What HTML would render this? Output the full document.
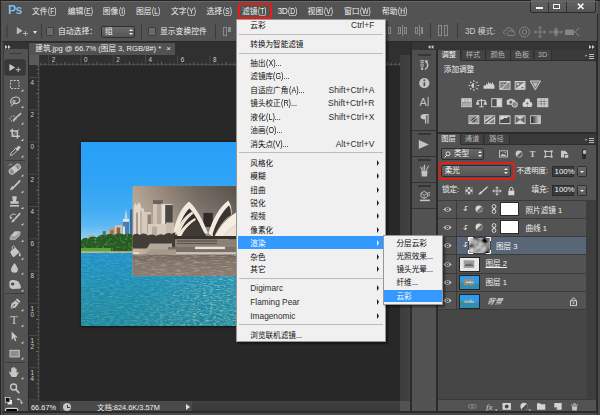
<!DOCTYPE html>
<html lang="zh-CN">
<head>
<meta charset="utf-8">
<title>Photoshop</title>
<style>
*{box-sizing:border-box;margin:0;padding:0}
html,body{width:600px;height:415px;overflow:hidden;background:#4a4a4a}
body{position:relative;font-family:"Liberation Sans","Noto Sans CJK SC",sans-serif;font-size:8.5px;color:#e6e6e6;line-height:1}
.a{position:absolute}
.t{position:absolute;white-space:nowrap;line-height:10px;height:10px}
/* frame */
#frame{left:0;top:0;width:600px;height:415px;background:#4a4a4a;border:1px solid #232323;border-left:1.5px solid #262626;border-bottom:none}
/* menubar */
#menubar{left:2px;top:1px;width:597px;height:19.5px;background:#535353;border-bottom:1px solid #363636}
#menubar .t{top:5px;font-size:7.8px;color:#f0f0f0;font-weight:400}
.l{display:inline-block;font-size:8.3px;transform:scaleX(.8);transform-origin:0 50%;margin-left:0.6px}
.l u{text-decoration-thickness:0.6px;text-underline-offset:0.6px;text-decoration-color:rgba(240,240,240,.55)}
#menubar #ps{left:5.5px;top:0.4px;font-size:13.6px;transform:scaleX(.9);transform-origin:0 50%;font-weight:bold;color:#7cbef0;line-height:17px;height:17px;letter-spacing:-0.6px}
/* options bar */
#optbar{left:2px;top:20px;width:597px;height:22px;background:#535353;border-top:1px solid #565656;border-bottom:1px solid #2a2a2a}
#optbar .t{top:5px;font-size:7.8px;color:#f0f0f0;font-weight:400}
/* tools */
#tools{left:3px;top:42px;width:25px;height:372px;background:#535353}
#toolshead{left:3px;top:42px;width:25px;height:7px;background:#333}
/* doc */
#tabbar{left:28px;top:42px;width:384px;height:13px;background:#303030}
#tab{left:29px;top:42.7px;width:145.7px;height:12.3px;background:#525252}
#tab .t{left:6.3px;top:1.8px;font-size:7.6px;color:#f0f0f0;font-weight:400}
#rcorner{left:29px;top:55px;width:10px;height:10px;background:#5a5a5a}
#vscroll{left:399.5px;top:55px;width:10.5px;height:358px;background:linear-gradient(90deg,#3c3c3c,#424242)}
#canvas{left:28px;top:55px;width:384px;height:358px;background:#282828}
#status{left:29px;top:401px;width:371px;height:12px;background:#4a4a4a}
#status .t{top:2px;font-size:7.4px;color:#f0f0f0}
/* dropdown */
#menu{left:236.3px;top:18.8px;width:149.8px;height:323.7px;background:#f0f0f0;box-shadow:inset 0 0 0 1px #979797,1.5px 1.5px 2px rgba(0,0,0,.45)}
#menu .t{font-size:7.6px;color:#0c0c0c;font-weight:400;line-height:11px;height:11px}
#menu .sc{font-size:8.5px;font-weight:400;color:#2e2e2e}
#menu .sep{position:absolute;left:2.5px;width:144px;height:1px;background:#bdbdbd}
#menu .arr{position:absolute;left:140.5px;width:0;height:0;border-left:2.5px solid #1a1a1a;border-top:3px solid transparent;border-bottom:3px solid transparent}
#sub{left:383.3px;top:234.6px;width:60px;height:70px;background:#f0f0f0;box-shadow:inset 0 0 0 1px #979797,1.5px 1.5px 2px rgba(0,0,0,.45)}
#sub .t{font-size:7.6px;color:#0c0c0c;font-weight:400;line-height:11px;height:11px}
/* right */
#rightbg{left:410px;top:42px;width:190px;height:372px;background:#2b2b2b}
#dockhead{left:412px;top:42px;width:184px;height:8px;background:#353535}
#dock{left:412px;top:50px;width:24px;height:363px;background:#525252}
#dock .dg{left:0;width:24px;background:#4f4f4f;box-shadow:0 1px 0 #333}
#dock .gr{left:5.5px;width:13px;height:2px;background:#363636}
.pn{background:#535353}
.tb{background:#3a3a3a;border-bottom:1px solid #2e2e2e}
.tab{top:0;height:10.5px;background:#424242;border-right:1px solid #2e2e2e;border-bottom:1px solid #2e2e2e;font-size:7.3px;line-height:10.5px;text-align:center;color:#b4b4b4;font-weight:400;white-space:nowrap}
.tab.on{background:#535353;color:#f4f4f4;border-bottom-color:#535353}
.pm{width:8px;height:5px;background:linear-gradient(#bbb 0 1px,transparent 1px 2px,#bbb 2px 3px,transparent 3px 4px,#bbb 4px 5px) 3px 0/5px 5px no-repeat}
.pm:before{content:"";position:absolute;left:-1px;top:1.5px;border-top:2px solid #bbb;border-left:1.5px solid transparent;border-right:1.5px solid transparent}
.ud{width:4px;height:7px}
.ud:before{content:"";position:absolute;left:0;top:0;border-bottom:2.5px solid #f0f0f0;border-left:2px solid transparent;border-right:2px solid transparent}
.ud:after{content:"";position:absolute;left:0;top:4.3px;border-top:2.5px solid #f0f0f0;border-left:2px solid transparent;border-right:2px solid transparent}
.fld{width:22px;height:11.4px;background:#3a3a3a;border:1px solid #2c2c2c}
.btn{width:10.2px;height:11.4px;background:linear-gradient(#6a6a6a,#585858);border:1px solid #2e2e2e;border-radius:1.5px}
.btn:after{content:"";position:absolute;left:2.3px;top:4px;border-top:2.6px solid #f0f0f0;border-left:2.3px solid transparent;border-right:2.3px solid transparent}
.m{display:inline-block;font-size:8.2px;transform:scaleX(.88);transform-origin:0 50%;margin-left:0.4px}
</style>
</head>
<body>
<div class="a" id="frame"></div>

<!-- MENUBAR -->
<div class="a" id="menubar">
  <div class="t" id="ps">Ps</div>
  <div class="t" style="left:30px">文件<span class="l">(<u>F</u>)</span></div>
  <div class="t" style="left:65.8px">编辑<span class="l">(<u>E</u>)</span></div>
  <div class="t" style="left:100.8px">图像<span class="l">(<u>I</u>)</span></div>
  <div class="t" style="left:134px">图层<span class="l">(<u>L</u>)</span></div>
  <div class="t" style="left:169px">文字<span class="l">(<u>Y</u>)</span></div>
  <div class="t" style="left:204.5px">选择<span class="l">(<u>S</u>)</span></div>
  <div class="t" style="left:240px">滤镜<span class="l">(<u>T</u>)</span></div>
  <div class="t" style="left:275.5px"><span style="font-size:8.3px;letter-spacing:-0.4px">3D</span><span class="l">(<u>D</u>)</span></div>
  <div class="t" style="left:305.6px">视图<span class="l">(<u>V</u>)</span></div>
  <div class="t" style="left:342px">窗口<span class="l">(<u>W</u>)</span></div>
  <div class="t" style="left:380px">帮助<span class="l">(<u>H</u>)</span></div>
</div>
<div class="a" style="left:238px;top:3px;width:34px;height:16px;border:2.2px solid #ea1a14;border-radius:2.5px"></div>
<!-- window controls -->
<div class="a" id="wc" style="left:530px;top:0;width:66px;height:12.8px;background:linear-gradient(#626262,#565656);border:1px solid #2c2c2c;border-top:none;border-radius:0 0 3px 3px"></div>
<div class="a" style="left:548px;top:1px;width:1px;height:11px;background:#333"></div>
<div class="a" style="left:565.5px;top:1px;width:1px;height:11px;background:#333"></div>
<div class="a" style="left:536.3px;top:7px;width:6.7px;height:2.2px;background:#f4f4f4"></div>
<div class="a" style="left:553px;top:3.8px;width:7.2px;height:5.6px;border:1.6px solid #f4f4f4"></div>
<svg class="a" style="left:576.5px;top:3.3px" width="7.4" height="6.6" viewBox="0 0 7.4 6.6"><path d="M0.9 0.6L6.5 6M6.5 0.6L0.9 6" stroke="#f4f4f4" stroke-width="1.6" fill="none"/></svg>

<!-- OPTIONS BAR -->
<div class="a" id="optbar"><div class="a" style="left:0;top:1px;width:597px;height:20px">
  <div class="a" style="left:4px;top:3px;width:1.5px;height:13px;background:#464646"></div>
  <svg class="a" style="left:14px;top:4px" width="14" height="11" viewBox="0 0 14 11"><path d="M0.8 1L0.8 8.4L6.6 4.7Z" fill="#bcbcbc"/><path d="M9.4 5V10M6.9 7.5H11.9" stroke="#bcbcbc" stroke-width="0.9" fill="none"/></svg>
  <div class="a" style="left:31px;top:9px;width:0;height:0;border-top:3px solid #e0e0e0;border-left:2.5px solid transparent;border-right:2.5px solid transparent"></div>
  <div class="a" style="left:39px;top:2px;width:1px;height:15px;background:#3a3a3a"></div>
  <div class="a" style="left:44px;top:5px;width:8px;height:9px;background:#6a6a6a;border:1px solid #3c3c3c;border-radius:1.5px"></div>
  <div class="t" style="left:56px">自动选择：</div>
  <div class="a" style="left:98.5px;top:3.5px;width:34.5px;height:12.7px;background:linear-gradient(#6b6b6b,#565656);border:1px solid #2f2f2f;border-radius:2px"></div>
  <div class="t" style="left:103px">组</div>
  <div class="a" style="left:127px;top:6.5px;width:0;height:0;border-bottom:2.5px solid #eee;border-left:2px solid transparent;border-right:2px solid transparent"></div>
  <div class="a" style="left:127px;top:10.5px;width:0;height:0;border-top:2.5px solid #eee;border-left:2px solid transparent;border-right:2px solid transparent"></div>
  <div class="a" style="left:139px;top:2px;width:1px;height:15px;background:#3a3a3a"></div>
  <div class="a" style="left:146px;top:5px;width:8px;height:9px;background:#6a6a6a;border:1px solid #3c3c3c;border-radius:1.5px"></div>
  <div class="t" style="left:158px">显示变换控件</div>
  <div class="a" style="left:213px;top:2px;width:1px;height:15px;background:#3a3a3a"></div>
  <div class="a" style="left:221px;top:5px;width:4px;height:9px;border:1px solid #8a8a8a"></div>
  <div class="a" style="left:226px;top:5px;width:3px;height:5px;background:#8a8a8a"></div>
  <!-- right side icons -->
  <div class="a" style="left:386px;top:5px;width:3px;height:7px;border:1px solid #8a8a8a"></div>
  <div class="a" style="left:396px;top:5px;width:3px;height:7px;border:1px solid #8a8a8a"></div><div class="a" style="left:400px;top:3px;width:1px;height:11px;background:#8a8a8a"></div><div class="a" style="left:402px;top:5px;width:3px;height:7px;border:1px solid #8a8a8a"></div>
  <div class="a" style="left:413px;top:5px;width:3px;height:7px;border:1px solid #8a8a8a"></div><div class="a" style="left:417px;top:3px;width:1px;height:11px;background:#8a8a8a"></div><div class="a" style="left:419px;top:5px;width:2px;height:7px;background:#8a8a8a"></div>
  <div class="a" style="left:428px;top:1px;width:1px;height:15px;background:#3a3a3a"></div>
  <div class="a" style="left:436px;top:3px;width:4px;height:11px;border:1px solid #8a8a8a"></div><div class="a" style="left:442px;top:3px;width:4px;height:11px;border:1px solid #8a8a8a"></div>
  <div class="a" style="left:455px;top:1px;width:1px;height:15px;background:#3a3a3a"></div>
  <div class="t" style="left:463px;color:#d0d0d0"><span style="font-size:8.2px">3D</span> 模式:</div>
  <svg class="a" style="left:500px;top:2.5px" width="80" height="14" viewBox="0 0 80 14" fill="none" stroke="#858585" stroke-width="1">
    <path d="M3 9.5a2.3 2.3 0 0 1 .8-4.4a3.2 3.2 0 0 1 6-.6a2.3 2.3 0 0 1 2 2.6M6 10.5a2 2 0 0 1 .5-3.5a2.6 2.6 0 0 1 4.8 0a2 2 0 0 1 .6 3.6Z"/>
    <circle cx="22.5" cy="7" r="5"/><circle cx="22.5" cy="7" r="2.2"/>
    <path d="M38 1.5V12.5M32.5 7H43.5M36.3 3.2L38 1.5L39.7 3.2M36.3 10.8L38 12.5L39.7 10.8M34.2 5.3L32.5 7L34.2 8.7M41.8 5.3L43.5 7L41.8 8.7"/>
    <path d="M47.5 7H60.5M54 3V11M52.3 4.5L54 3L55.7 4.5M52.3 9.5L54 11L55.7 9.5M49 5.5L47.5 7L49 8.5M59 5.5L60.5 7L59 8.5"/><circle cx="54" cy="7" r="1.8" fill="#858585"/>
    <rect x="63.5" y="5" width="8" height="4.5" fill="#858585"/><path d="M77 3L73 7L77 11"/>
  </svg>
</div></div>

<!-- TOOLS -->
<div class="a" id="tools"></div>
<div class="a" id="toolshead"></div>
<svg class="a" style="left:5px;top:45px" width="6" height="4" viewBox="0 0 6 4"><path d="M0 0L2.5 2L0 4ZM3 0L5.5 2L3 4Z" fill="#d0d0d0"/></svg>
<div class="a" style="left:9px;top:53px;width:13px;height:1px;background:#3a3a3a"></div>
<div class="a" style="left:5px;top:60px;width:20px;height:15px;background:#383838;border-radius:2px;box-shadow:0 0 0 0.5px #2c2c2c"></div>
<div class="a" style="left:5px;top:160px;width:20px;height:1px;background:#3c3c3c"></div>
<div class="a" style="left:5px;top:293px;width:20px;height:1px;background:#3c3c3c"></div>
<div class="a" style="left:5px;top:362px;width:20px;height:1px;background:#3c3c3c"></div>
<svg class="a" style="left:0;top:42px" width="29" height="373" viewBox="0 42 29 373"><path d="M9.4 64V71L15.2 67.5Z" fill="#c8c8c8"/><path d="M18.2 67.2V72.2M15.7 69.7H20.7" stroke="#c8c8c8" stroke-width="0.9"/><rect x="10.5" y="80.5" width="8.5" height="8" fill="none" stroke="#c6c6c6" stroke-width="1" stroke-dasharray="2 1.2"/><path d="M23.3 89.3V91.5H21.1Z" fill="#e0e0e0"/><path d="M11.5 103.8C9.5 101.5 11 97.5 15.5 97C19.5 96.8 20.8 100 19 102.2C17.5 104 14.5 104 13.2 102.6C12.2 101.4 13.2 100.2 14.5 100.6C15.6 101 15 102.6 13.5 103.6C12.5 104.5 11.5 105.6 11 106.2" fill="none" stroke="#c6c6c6" stroke-width="1.1"/><path d="M23.3 105.8V108H21.1Z" fill="#e0e0e0"/><ellipse cx="13" cy="118.6" rx="3" ry="2.6" fill="none" stroke="#c6c6c6" stroke-width="0.9" stroke-dasharray="1.6 1"/><path d="M14 119.5L20.6 113.6" stroke="#c6c6c6" stroke-width="1.6" stroke-linecap="round"/><path d="M12.6 121.3C13.4 121 14.8 120.6 15.2 119.4L14.2 118.6C13 118.9 13.2 120.4 12.6 121.3Z" fill="#c6c6c6"/><path d="M23.3 122.3V124.5H21.1Z" fill="#e0e0e0"/><path d="M12.3 128.7V136.2H19.8M10 131H17.4V138.4" fill="none" stroke="#c6c6c6" stroke-width="1.5"/><path d="M12.8 135.6L19.2 129.3" stroke="#c6c6c6" stroke-width="0.7"/><path d="M23.3 138.8V141H21.1Z" fill="#e0e0e0"/><path d="M10.3 155.4L11 153L15.6 148.4L17.4 150.2L12.8 154.8Z" fill="none" stroke="#c6c6c6" stroke-width="0.9"/><path d="M15 147.6L18.2 150.8M16 149L18 146.6Q19.4 145.6 20 147Q20.3 148 19.4 148.8L17.4 150.6Z" fill="#c6c6c6" stroke="#c6c6c6" stroke-width="1"/><path d="M23.3 155.3V157.5H21.1Z" fill="#e0e0e0"/><g transform="rotate(-38 14.8 169.2)"><rect x="8.6" y="166.4" width="12.4" height="5.6" rx="2.6" fill="#8c8c8c" stroke="#c6c6c6" stroke-width="1"/><rect x="12.6" y="166.4" width="4.4" height="5.6" fill="#c6c6c6"/></g><path d="M9 165.5Q9.5 163.6 12 164.6" fill="none" stroke="#c6c6c6" stroke-width="0.9" stroke-dasharray="1.3 0.9"/><path d="M23.3 174.3V176.5H21.1Z" fill="#e0e0e0"/><path d="M19.8 180.9L14.4 186.6" stroke="#c6c6c6" stroke-width="1.7" stroke-linecap="round"/><path d="M9.6 190.2C11.4 189.9 13.8 189.3 14.4 187.4L12.8 186C10.9 186.4 11 188.8 9.6 190.2Z" fill="#c6c6c6"/><path d="M23.3 190.60000000000002V192.8H21.1Z" fill="#e0e0e0"/><path d="M13 196.3H16Q17 196.3 16.8 197.4L16 201.2H18.6V203.8H10.4V201.2H13L12.2 197.4Q12 196.3 13 196.3Z" fill="#c6c6c6"/><rect x="10" y="205" width="9" height="1.6" fill="#c6c6c6"/><path d="M23.3 206.8V209H21.1Z" fill="#e0e0e0"/><path d="M19.8 213.6L15.2 218.6" stroke="#c6c6c6" stroke-width="1.6" stroke-linecap="round"/><path d="M11 222.6C12.6 222.3 14.8 221.8 15.3 220L13.8 218.8C12.2 219.2 12.3 221.4 11 222.6Z" fill="#c6c6c6"/><path d="M10.4 218.4A3.4 3.4 0 0 1 15.6 214.6" fill="none" stroke="#c6c6c6" stroke-width="1"/><path d="M9.6 216.6L10.4 219.3L12.6 217.8Z" fill="#c6c6c6"/><path d="M23.3 223.10000000000002V225.3H21.1Z" fill="#e0e0e0"/><path d="M10.2 236.2L14.8 231.2H20L15.4 236.2Z" fill="#c6c6c6"/><path d="M10.2 236.8H15.4L20 231.8V235L15.4 239.6H10.2Z" fill="#9c9c9c" stroke="#c6c6c6" stroke-width="0.7"/><path d="M23.3 239.8V242H21.1Z" fill="#e0e0e0"/><path d="M11 250.8L15.2 247.4L19.6 252L14.6 256.6Q13.6 257.4 12.6 256.4L10.6 253.2Q10 251.6 11 250.8Z" fill="#c6c6c6"/><path d="M12.2 249.4Q11.6 246.2 13.4 246Q15 246 15.4 249" fill="none" stroke="#c6c6c6" stroke-width="0.9"/><path d="M19.8 252.4Q21.2 254.6 20.4 256.2Q19.4 256.8 18.8 255.6Q18.6 254 19.8 252.4Z" fill="#c6c6c6"/><path d="M23.3 257.5V259.7H21.1Z" fill="#e0e0e0"/><path d="M14.5 263Q18.2 268 17.9 269.6A3.4 3.2 0 0 1 11.1 269.6Q10.8 268 14.5 263Z" fill="#c6c6c6"/><path d="M23.3 272.40000000000003V274.6H21.1Z" fill="#e0e0e0"/><path d="M9.4 283.2Q9 280.4 12.6 280Q16 279.6 18.6 281.8L21 286.4Q21.2 288.6 18.6 288.8L12 289Q9.6 288.4 9.4 286Z" fill="#c6c6c6"/><ellipse cx="12.6" cy="284" rx="1.7" ry="1.5" fill="#4a4a4a"/><path d="M23.3 289.40000000000003V291.6H21.1Z" fill="#e0e0e0"/><path d="M10.4 308.8L11.6 303.4L15.4 300.4L18.6 303.6L15.6 307.4Z" fill="#c6c6c6"/><path d="M10.6 308.6L14.2 305" stroke="#535353" stroke-width="0.7"/><circle cx="14.4" cy="304.8" r="0.8" fill="#535353"/><path d="M15.8 299.8L17.2 298.4L20.4 301.6L19 303Z" fill="#c6c6c6"/><path d="M23.3 309.1V311.3H21.1Z" fill="#e0e0e0"/><text x="10.3" y="324.4" font-family="Liberation Serif, serif" font-size="12.4" fill="#c6c6c6">T</text><path d="M23.3 324.5V326.7H21.1Z" fill="#e0e0e0"/><path d="M11.6 331.4V340L13.6 338L15 341.2L16.4 340.6L15 337.6H17.8Z" fill="#c6c6c6"/><path d="M23.3 341.3V343.5H21.1Z" fill="#e0e0e0"/><rect x="10" y="350.3" width="9.2" height="6.6" fill="#8d8d8d" stroke="#c6c6c6" stroke-width="1"/><path d="M23.3 357.2V359.4H21.1Z" fill="#e0e0e0"/><path d="M11.6 377L9.2 372.6Q8.8 371.4 9.8 371.4L11.2 372.8V368.6Q11.8 367.6 12.4 368.6V371V367.6Q13 366.6 13.8 367.6V371V367.8Q14.6 366.9 15.2 367.8V371.2V368.8Q16 368 16.6 368.8V373Q18 371.6 18.8 372.2L16.2 377Z" fill="#c6c6c6"/><path d="M23.3 377.1V379.3H21.1Z" fill="#e0e0e0"/><circle cx="13.6" cy="387" r="3" fill="none" stroke="#c6c6c6" stroke-width="1.3"/><path d="M15.8 389.4L18.8 392.6" stroke="#c6c6c6" stroke-width="1.7" stroke-linecap="round"/><rect x="7.6" y="400" width="4.4" height="4.4" fill="#e6e6e6"/><rect x="5.3" y="397.6" width="4.6" height="4.6" fill="#111" stroke="#e6e6e6" stroke-width="0.7"/><path d="M18 399.2Q21.4 399 21.6 402.4" fill="none" stroke="#c6c6c6" stroke-width="1"/><path d="M16.6 399.2L18.6 397.6V400.8ZM21.6 404.2L20 402.2H23.2Z" fill="#c6c6c6"/><rect x="5.6" y="408.4" width="12" height="8" rx="1.2" fill="#000" stroke="#d0d0d0" stroke-width="1.2"/></svg>

<!-- DOCUMENT -->
<div class="a" id="tabbar"></div>
<div class="a" id="tab"><div class="t">建筑.jpg @ 66.7% (图层 3, RGB/8#) * <span style="font-size:8px;margin-left:3px">×</span></div></div>
<div class="a" id="canvas"></div>
<svg class="a" style="left:29px;top:55px" width="371" height="11" viewBox="0 0 371 11"><rect width="371" height="11" fill="#303030"/><g stroke="#4c4c4c" stroke-width="0.9"><path d="M19.75 0V10"/><path d="M52.00 0V10"/><path d="M84.25 0V10"/><path d="M116.50 0V10"/><path d="M148.75 0V10"/><path d="M181.00 0V10"/><path d="M213.25 0V10"/><path d="M245.50 0V10"/><path d="M277.75 0V10"/><path d="M310.00 0V10"/><path d="M342.25 0V10"/></g><g stroke="#7a7a7a" stroke-width="0.8"><path d="M11.69 8.3V10"/><path d="M15.72 8.3V10"/><path d="M23.78 8.3V10"/><path d="M27.81 8.3V10"/><path d="M31.84 8.3V10"/><path d="M35.88 7V10"/><path d="M39.91 8.3V10"/><path d="M43.94 8.3V10"/><path d="M47.97 8.3V10"/><path d="M56.03 8.3V10"/><path d="M60.06 8.3V10"/><path d="M64.09 8.3V10"/><path d="M68.12 7V10"/><path d="M72.16 8.3V10"/><path d="M76.19 8.3V10"/><path d="M80.22 8.3V10"/><path d="M88.28 8.3V10"/><path d="M92.31 8.3V10"/><path d="M96.34 8.3V10"/><path d="M100.38 7V10"/><path d="M104.41 8.3V10"/><path d="M108.44 8.3V10"/><path d="M112.47 8.3V10"/><path d="M120.53 8.3V10"/><path d="M124.56 8.3V10"/><path d="M128.59 8.3V10"/><path d="M132.62 7V10"/><path d="M136.66 8.3V10"/><path d="M140.69 8.3V10"/><path d="M144.72 8.3V10"/><path d="M152.78 8.3V10"/><path d="M156.81 8.3V10"/><path d="M160.84 8.3V10"/><path d="M164.88 7V10"/><path d="M168.91 8.3V10"/><path d="M172.94 8.3V10"/><path d="M176.97 8.3V10"/><path d="M185.03 8.3V10"/><path d="M189.06 8.3V10"/><path d="M193.09 8.3V10"/><path d="M197.12 7V10"/><path d="M201.16 8.3V10"/><path d="M205.19 8.3V10"/><path d="M209.22 8.3V10"/><path d="M217.28 8.3V10"/><path d="M221.31 8.3V10"/><path d="M225.34 8.3V10"/><path d="M229.38 7V10"/><path d="M233.41 8.3V10"/><path d="M237.44 8.3V10"/><path d="M241.47 8.3V10"/><path d="M249.53 8.3V10"/><path d="M253.56 8.3V10"/><path d="M257.59 8.3V10"/><path d="M261.62 7V10"/><path d="M265.66 8.3V10"/><path d="M269.69 8.3V10"/><path d="M273.72 8.3V10"/><path d="M281.78 8.3V10"/><path d="M285.81 8.3V10"/><path d="M289.84 8.3V10"/><path d="M293.88 7V10"/><path d="M297.91 8.3V10"/><path d="M301.94 8.3V10"/><path d="M305.97 8.3V10"/><path d="M314.03 8.3V10"/><path d="M318.06 8.3V10"/><path d="M322.09 8.3V10"/><path d="M326.12 7V10"/><path d="M330.16 8.3V10"/><path d="M334.19 8.3V10"/><path d="M338.22 8.3V10"/><path d="M346.28 8.3V10"/><path d="M350.31 8.3V10"/><path d="M354.34 8.3V10"/><path d="M358.38 7V10"/><path d="M362.41 8.3V10"/><path d="M366.44 8.3V10"/><path d="M370.47 8.3V10"/></g><g fill="#cfcfcf" font-size="6.3" font-family="Liberation Sans, sans-serif"><text x="22.8" y="6.6">2</text><text x="55.0" y="6.6">0</text><text x="87.2" y="6.6">2</text><text x="119.5" y="6.6">4</text><text x="151.8" y="6.6">6</text><text x="184.0" y="6.6">8</text><text x="216.2" y="6.6">10</text><text x="248.5" y="6.6">12</text><text x="280.8" y="6.6">14</text><text x="313.0" y="6.6">16</text><text x="345.2" y="6.6">18</text></g><rect y="9.6" width="371" height="0.9" fill="#626262"/><rect y="10.5" width="371" height="0.5" fill="#222"/></svg>
<svg class="a" style="left:29px;top:55px" width="11" height="346" viewBox="0 0 11 346"><rect width="11" height="346" fill="#303030"/><g stroke="#4c4c4c" stroke-width="0.9"><path d="M0 22.50H10"/><path d="M0 54.75H10"/><path d="M0 87.00H10"/><path d="M0 119.25H10"/><path d="M0 151.50H10"/><path d="M0 183.75H10"/><path d="M0 216.00H10"/><path d="M0 248.25H10"/><path d="M0 280.50H10"/><path d="M0 312.75H10"/><path d="M0 345.00H10"/></g><g stroke="#7a7a7a" stroke-width="0.8"><path d="M8.3 10.41H10"/><path d="M8.3 14.44H10"/><path d="M8.3 18.47H10"/><path d="M8.3 26.53H10"/><path d="M8.3 30.56H10"/><path d="M8.3 34.59H10"/><path d="M7 38.62H10"/><path d="M8.3 42.66H10"/><path d="M8.3 46.69H10"/><path d="M8.3 50.72H10"/><path d="M8.3 58.78H10"/><path d="M8.3 62.81H10"/><path d="M8.3 66.84H10"/><path d="M7 70.88H10"/><path d="M8.3 74.91H10"/><path d="M8.3 78.94H10"/><path d="M8.3 82.97H10"/><path d="M8.3 91.03H10"/><path d="M8.3 95.06H10"/><path d="M8.3 99.09H10"/><path d="M7 103.12H10"/><path d="M8.3 107.16H10"/><path d="M8.3 111.19H10"/><path d="M8.3 115.22H10"/><path d="M8.3 123.28H10"/><path d="M8.3 127.31H10"/><path d="M8.3 131.34H10"/><path d="M7 135.38H10"/><path d="M8.3 139.41H10"/><path d="M8.3 143.44H10"/><path d="M8.3 147.47H10"/><path d="M8.3 155.53H10"/><path d="M8.3 159.56H10"/><path d="M8.3 163.59H10"/><path d="M7 167.62H10"/><path d="M8.3 171.66H10"/><path d="M8.3 175.69H10"/><path d="M8.3 179.72H10"/><path d="M8.3 187.78H10"/><path d="M8.3 191.81H10"/><path d="M8.3 195.84H10"/><path d="M7 199.88H10"/><path d="M8.3 203.91H10"/><path d="M8.3 207.94H10"/><path d="M8.3 211.97H10"/><path d="M8.3 220.03H10"/><path d="M8.3 224.06H10"/><path d="M8.3 228.09H10"/><path d="M7 232.12H10"/><path d="M8.3 236.16H10"/><path d="M8.3 240.19H10"/><path d="M8.3 244.22H10"/><path d="M8.3 252.28H10"/><path d="M8.3 256.31H10"/><path d="M8.3 260.34H10"/><path d="M7 264.38H10"/><path d="M8.3 268.41H10"/><path d="M8.3 272.44H10"/><path d="M8.3 276.47H10"/><path d="M8.3 284.53H10"/><path d="M8.3 288.56H10"/><path d="M8.3 292.59H10"/><path d="M7 296.62H10"/><path d="M8.3 300.66H10"/><path d="M8.3 304.69H10"/><path d="M8.3 308.72H10"/><path d="M8.3 316.78H10"/><path d="M8.3 320.81H10"/><path d="M8.3 324.84H10"/><path d="M7 328.88H10"/><path d="M8.3 332.91H10"/><path d="M8.3 336.94H10"/><path d="M8.3 340.97H10"/></g><g fill="#cfcfcf" font-size="6.3" font-family="Liberation Sans, sans-serif"><text x="1.6" y="29.8">4</text><text x="1.6" y="62.0">2</text><text x="1.6" y="94.3">0</text><text x="1.6" y="126.5">2</text><text x="1.6" y="158.8">4</text><text x="1.6" y="191.1">6</text><text x="1.6" y="223.3">8</text><text x="1.6" y="255.6">1</text><text x="1.6" y="261.8">0</text><text x="1.6" y="287.8">1</text><text x="1.6" y="294.0">2</text><text x="1.6" y="320.1">1</text><text x="1.6" y="326.2">4</text></g><rect x="9.6" width="0.9" height="346" fill="#626262"/><rect x="10.5" width="0.5" height="346" fill="#222"/></svg>
<div class="a" id="rcorner"></div>
<div class="a" id="vscroll"></div>
<div class="a" id="status">
  <div class="a" style="left:0;top:0;width:31px;height:12px;background:#3a3a3a"></div>
  <div class="t" style="left:2px">66.67%</div>
  <div class="a" style="left:34px;top:2px;width:8px;height:8px;border-radius:50%;background:#c6c6c6"></div>
  <div class="a" style="left:38px;top:3.5px;width:1px;height:3px;background:#444"></div><div class="a" style="left:38px;top:6px;width:2.5px;height:1px;background:#444"></div>
  <div class="t" style="left:68px">文档:824.6K/3.57M</div>
  <div class="a" style="left:157px;top:3px;width:0;height:0;border-left:4px solid #e0e0e0;border-top:3px solid transparent;border-bottom:3px solid transparent"></div>
  <div class="a" style="left:163px;top:0;width:208px;height:12px;background:linear-gradient(#414141,#363636)"></div>
</div>

<!-- PHOTO -->
<div class="a" style="left:81px;top:141.5px;width:160px;height:184px;box-shadow:0 0.5px 2.5px 0.5px rgba(0,0,0,.55)"></div>
<svg class="a" id="photo" style="left:81px;top:141.5px" width="160" height="184" viewBox="81 141.5 160 184">
<defs>
  <linearGradient id="sky" x1="0" y1="0" x2="0" y2="1"><stop offset="0" stop-color="#28a0f8"/><stop offset="0.34" stop-color="#2fa3f5"/><stop offset="0.6" stop-color="#41acf4"/><stop offset="0.745" stop-color="#5bb8f3"/><stop offset="0.84" stop-color="#88ccf2"/><stop offset="1" stop-color="#9ad4f2"/></linearGradient>
  <linearGradient id="wat" x1="0" y1="0" x2="0" y2="1"><stop offset="0" stop-color="#1e8cd0"/><stop offset="0.25" stop-color="#1f8dc2"/><stop offset="0.5" stop-color="#2089ac"/><stop offset="1" stop-color="#218296"/></linearGradient>
  <linearGradient id="osky" x1="0" y1="0" x2="1" y2="0"><stop offset="0" stop-color="#cbb9a4"/><stop offset="0.25" stop-color="#ac9c8b"/><stop offset="0.6" stop-color="#80756b"/><stop offset="1" stop-color="#625a53"/></linearGradient>
  <linearGradient id="oskyv" x1="0" y1="0" x2="0" y2="1"><stop offset="0" stop-color="#000" stop-opacity="0.12"/><stop offset="1" stop-color="#fff" stop-opacity="0.22"/></linearGradient>
  <linearGradient id="owat" x1="0" y1="0" x2="0" y2="1"><stop offset="0" stop-color="#74685e"/><stop offset="0.35" stop-color="#7f7267"/><stop offset="1" stop-color="#8b7c70"/></linearGradient>
  <filter id="rip" x="0" y="0" width="100%" height="100%"><feTurbulence type="fractalNoise" baseFrequency="0.22 0.8" numOctaves="2" seed="7"/><feColorMatrix type="matrix" values="0 0 0 0 0.3  0 0 0 0 0.68  0 0 0 0 0.85  0 0 0 0.8 -0.45"/></filter>
  <filter id="rip2" x="0" y="0" width="100%" height="100%"><feTurbulence type="fractalNoise" baseFrequency="0.2 0.75" numOctaves="2" seed="11"/><feColorMatrix type="matrix" values="0 0 0 0 0.04  0 0 0 0 0.4  0 0 0 0 0.48  0 0 0 1.7 -0.6"/></filter>
  <filter id="grn" x="0" y="0" width="100%" height="100%"><feTurbulence type="fractalNoise" baseFrequency="0.35" numOctaves="2" seed="3"/><feColorMatrix type="matrix" values="0 0 0 0 0.4  0 0 0 0 0.62  0 0 0 0 0.2  0 0 0 1.5 -0.8"/><feComposite in2="SourceAlpha" operator="in"/></filter>
  <filter id="rip3" x="0" y="0" width="100%" height="100%"><feTurbulence type="fractalNoise" baseFrequency="0.12 0.7" numOctaves="2" seed="5"/><feColorMatrix type="matrix" values="0 0 0 0 0.27  0 0 0 0 0.22  0 0 0 0 0.19  0 0 0 1.8 -0.7"/></filter>
  <filter id="rip4" x="0" y="0" width="100%" height="100%"><feTurbulence type="fractalNoise" baseFrequency="0.12 0.7" numOctaves="2" seed="9"/><feColorMatrix type="matrix" values="0 0 0 0 0.78  0 0 0 0 0.68  0 0 0 0 0.6  0 0 0 1.1 -0.55"/></filter>
  <filter id="spk" x="0" y="0" width="100%" height="100%"><feTurbulence type="fractalNoise" baseFrequency="0.3 0.8" numOctaves="2" seed="21"/><feColorMatrix type="matrix" values="0 0 0 0 0.7  0 0 0 0 0.66  0 0 0 0 0.46  0 0 0 1.8 -0.88"/></filter>
  <linearGradient id="mg" x1="0" y1="0" x2="1" y2="0.25"><stop offset="0" stop-color="#000"/><stop offset="0.45" stop-color="#000"/><stop offset="0.85" stop-color="#fff"/></linearGradient><mask id="mk"><rect x="81" y="270" width="160" height="56" fill="url(#mg)"/></mask>
  <filter id="soft"><feGaussianBlur stdDeviation="0.3"/></filter>
  <clipPath id="pc"><rect x="81" y="141.5" width="160" height="184"/></clipPath>
</defs>
<g clip-path="url(#pc)">
  <rect x="81" y="141.5" width="160" height="112" fill="url(#sky)"/>
  <!-- left skyline -->
  <rect x="88.3" y="234.5" width="5" height="6" fill="#b9a9a6"/>
  <rect x="102.8" y="230.6" width="3" height="7" fill="#5c6a5a"/>
  <rect x="109.3" y="227.7" width="5.4" height="9" fill="#c89a72"/><rect x="110.5" y="229.5" width="3" height="7" fill="#9a6a48"/>
  <rect x="115" y="224.8" width="7" height="12" fill="#dcc0aa"/><rect x="116.6" y="227" width="3.6" height="9" fill="#8e6046"/>
  <rect x="123" y="218.3" width="6" height="18" fill="#4d7dab"/><rect x="123" y="218.3" width="6" height="3" fill="#dfe8f0"/><path d="M126 207.5L124.6 218.3H127.4Z" fill="#c8d4e0"/><rect x="123" y="226" width="2" height="10" fill="#e8e0d8"/>
  <rect x="130" y="209" width="3" height="26" fill="#3b6b9b"/>
  <!-- trees -->
  <path d="M81 240Q84 236 88 238Q92 234.5 97 237Q100 233 105 235Q110 232 114 234.5Q119 232 124 234Q129 232.5 133 234V252H81Z" fill="#285a24"/>
  <path d="M81 240Q84 236 88 238Q92 234.5 97 237Q100 233 105 235Q110 232 114 234.5Q119 232 124 234Q129 232.5 133 234V252H81Z" filter="url(#grn)"/>
  <rect x="81" y="247.5" width="30" height="3.6" fill="#5da237"/>
  <rect x="81" y="250.8" width="52" height="1.7" fill="#c9bf9a"/>
  <!-- water -->
  <rect x="81" y="252.4" width="160" height="74" fill="url(#wat)"/>
  <rect x="81" y="252.4" width="160" height="74" filter="url(#rip2)"/>
  <rect x="81" y="252.4" width="160" height="74" filter="url(#rip)"/><g mask="url(#mk)"><rect x="81" y="270" width="160" height="56" filter="url(#spk)"/></g>
  <!-- overlay -->
  <g>
    <rect x="132.6" y="185.6" width="110" height="90" fill="url(#osky)"/>
    <rect x="132.6" y="185.6" width="110" height="50" fill="url(#oskyv)"/>
    <!-- city -->
    <path d="M133.7 234V206L135.5 202.3L137.2 206V204L139 201.5L141 205V208H143.8V234Z" fill="#e2d7ca"/>
    <path d="M136 234V212H138V234ZM140.4 234V210H141.6V234Z" fill="#a89c8e"/>
    <rect x="142" y="211.5" width="9" height="23" fill="#d6cabb"/><rect x="147.5" y="214" width="3.5" height="20" fill="#8d8276"/>
    <rect x="153" y="199.6" width="10" height="35" fill="#b5a99b"/><rect x="153" y="199.6" width="10" height="4" fill="#6b635b"/><rect x="153" y="203.6" width="4" height="31" fill="#cfc4b6"/>
    <rect x="161.2" y="203.3" width="11.4" height="28" fill="#4b4641"/><rect x="161.2" y="203.3" width="4" height="28" fill="#e9e0d4"/><rect x="161.2" y="203.3" width="11.4" height="1.3" fill="#d8cfc3"/>
    <rect x="148" y="223.5" width="26" height="14" fill="#d8ccbe"/><rect x="152" y="226" width="5" height="11" fill="#b8ac9e"/><rect x="166" y="222" width="8" height="13" fill="#c8bcae"/>
    <!-- dark trees -->
    <path d="M132.6 235Q136 232 140 234.5Q144 231.5 148 235Q152 233 156 235.5Q160 232.5 164 234.5Q168 231 172 233.5Q175 231 177 234V248H132.6Z" fill="#433d38"/>
    <path d="M150 243H172V249H146Z" fill="#b4a89a"/>
    <!-- dark building between sails -->
    <rect x="203.4" y="212.4" width="9.4" height="14" fill="#2f2b28"/>
    <!-- sail 1 -->
    <path d="M173.5 231C176 218 182 206 189 200.9C196 207 203 219 208 233L204 233C200 223 195 214 189.5 208C184 213 180 222 178 232Z" fill="#f1e9dd"/>
    <path d="M178 232C180 222 184 213 189.5 208C195 214 200 223 204 233Z" fill="#332e2a"/>
    <path d="M175 234C178 224 184 216 192 211L193.5 213C187 218 182 225 179.5 234Z" fill="#ebe2d5"/>
    <path d="M176 238C180 229 187 222 195 217.5L196 219.5C189 224 183 231 180 238Z" fill="#efe6da"/>
    <path d="M180.5 238C184 230 189 224 196 219.5L207 236.5H181Z" fill="#403a35"/>
    <!-- sail 2 -->
    <path d="M208.5 233C212 220 219 207 228.2 200C231 204 232 209 231.5 214C225 219 218 227 214 237Z" fill="#f3ebdf"/>
    <path d="M214 237C218 227 224 219 231 214.5C231 210 230.5 207 229 205C222 211 216 222 212.5 234Z" fill="#3a3530"/>
    <path d="M214 238C218 228 226 218 236 212C238 214 239 218 239 222C231 227 224 233 220 240Z" fill="#f5ede1"/>
    <path d="M219 241C223 234 230 227 241 221V234C234 236 227 239 223 243Z" fill="#ece3d6"/>
    <path d="M224 243C228 240 234 237 241 235V246H224Z" fill="#4a443e"/>
    <!-- podium -->
    <rect x="174" y="235.5" width="68" height="3.2" fill="#37322d"/>
    <rect x="175" y="238.7" width="67" height="8" fill="#8b8177"/>
    <rect x="177" y="240" width="40" height="1" fill="#4a443e"/><rect x="177" y="242.5" width="40" height="1" fill="#5a534c"/>
    <rect x="168" y="246.6" width="74" height="7.5" fill="#7a7067"/>
    <rect x="195" y="246.2" width="30" height="2.4" fill="#ece4d8"/>
    <rect x="168" y="251.6" width="74" height="2.6" fill="#cfc3b6"/><path d="M155.3 249.5L156.3 253.6H154.6Z" fill="#f0e8dc"/>
    <path d="M150 249H176V253.5H146Z" fill="#a4998c"/>
    <rect x="133" y="251.8" width="6" height="1.8" fill="#e8e0d4"/>
    <!-- sepia water -->
    <rect x="132.6" y="254.3" width="110" height="21.2" fill="url(#owat)"/>
    <rect x="132.6" y="254.3" width="110" height="5" fill="#6f655d" opacity="0.4"/><rect x="132.6" y="254.3" width="110" height="21.2" filter="url(#rip3)"/><rect x="132.6" y="254.3" width="110" height="21.2" filter="url(#rip4)"/>
  </g>
</g>
</svg>

<!-- RIGHT -->
<div class="a" id="rightbg"></div>
<div class="a" id="dockhead"></div>
<svg class="a" style="left:428px;top:45px" width="6" height="4" viewBox="0 0 6 4"><path d="M2.5 0L0 2L2.5 4ZM5.5 0L3 2L5.5 4Z" fill="#d0d0d0"/></svg>
<svg class="a" style="left:589px;top:45px" width="6" height="4" viewBox="0 0 6 4"><path d="M0 0L2.5 2L0 4ZM3 0L5.5 2L3 4Z" fill="#d0d0d0"/></svg>
<div class="a" id="dock">
  <div class="a dg" style="top:0;height:80px"></div>
  <div class="a dg" style="top:81px;height:25px"></div>
  <div class="a dg" style="top:107px;height:24.5px"></div>
  <div class="a dg" style="top:132.5px;height:25px"></div>
  <div class="a gr" style="top:3.5px"></div><div class="a gr" style="top:83px"></div><div class="a gr" style="top:109px"></div><div class="a gr" style="top:134.5px"></div>
</div>
<svg class="a" style="left:412px;top:50px" width="24" height="160" viewBox="412 50 24 160"><rect x="421" y="60.3" width="2.2" height="2.2" fill="none" stroke="#c4c4c4" stroke-width="0.8"/><rect x="421" y="64" width="2.2" height="2.2" fill="none" stroke="#c4c4c4" stroke-width="0.8"/><rect x="421" y="67.6" width="2.2" height="2.2" fill="#c4c4c4"/><path d="M425 69.6Q429.6 66 426.4 61.6" fill="none" stroke="#c4c4c4" stroke-width="1.3"/><path d="M424.6 60.2L428.4 60.6L426 63.6Z" fill="#c4c4c4"/><circle cx="424.3" cy="83.2" r="5.1" fill="#c4c4c4"/><rect x="423.5" y="82.2" width="1.7" height="4" fill="#535353"/><circle cx="424.3" cy="80.3" r="1" fill="#535353"/><text x="419.6" y="105.5" font-family="Liberation Sans, sans-serif" font-size="11" fill="#c4c4c4">A</text><rect x="427.6" y="96.8" width="1" height="9.4" fill="#c4c4c4"/><path d="M424.6 114H428.6V123.6H427.4V115.2H426.2V123.6H425V119.6Q420.6 119.4 420.6 116.8Q420.6 114 424.6 114Z" fill="#c4c4c4"/><path d="M418.8 140L428.8 144.5L418.8 149Z" fill="#c4c4c4"/><path d="M421.2 170.4H427.6L427 176.6H421.8Z" fill="#c4c4c4"/><path d="M423 170V166.4M424.6 170V164.6M426.4 170L428.6 165.6M422.2 170L420.4 166.8" stroke="#c4c4c4" stroke-width="1"/><path d="M421 193.2L424.2 191.4L427.4 193.2V196.6L424.2 198.4L421 196.6Z" fill="none" stroke="#c4c4c4" stroke-width="0.9"/><path d="M421 193.2L424.2 195L427.4 193.2M424.2 195V198.4" fill="none" stroke="#c4c4c4" stroke-width="0.7"/><rect x="428.4" y="192" width="1.4" height="1.4" fill="#c4c4c4"/><rect x="428.4" y="194.4" width="1.4" height="1.4" fill="#c4c4c4"/><rect x="420" y="199.6" width="9.8" height="1.6" fill="#c4c4c4"/></svg>

<!-- ADJUSTMENTS PANEL -->
<div class="a pn" style="left:437.5px;top:50px;width:158.5px;height:81.5px">
  <div class="a tb" style="left:0;top:0;width:158.5px;height:10.5px"></div>
  <div class="a tab on" style="left:0;width:23.5px">调整</div>
  <div class="a tab" style="left:24px;width:24px">样式</div>
  <div class="a tab" style="left:48.5px;width:24.5px">颜色</div>
  <div class="a tab" style="left:73.5px;width:23px">色板</div>
  <div class="a tab" style="left:97px;width:17px"><span style="font-size:7.4px">3D</span></div>
  <div class="a pm" style="left:148px;top:3.5px"></div>
  <div class="t" style="left:6.3px;top:14.6px;font-size:7.6px;color:#f2f2f2;font-weight:400">添加调整</div>
  <svg class="a" style="left:0;top:0" width="158" height="81" viewBox="0 0 158 81"><circle cx="35.9" cy="35.5" r="2.5" fill="#d2d2d2"/><path d="M35.9 33.0A2.5 2.5 0 0 1 35.9 38.0Z" fill="#555"/><path d="M39.50 35.50L41.20 35.50" stroke="#d2d2d2" stroke-width="1.1"/><path d="M38.45 38.05L39.65 39.25" stroke="#d2d2d2" stroke-width="1.1"/><path d="M35.90 39.10L35.90 40.80" stroke="#d2d2d2" stroke-width="1.1"/><path d="M33.35 38.05L32.15 39.25" stroke="#d2d2d2" stroke-width="1.1"/><path d="M32.30 35.50L30.60 35.50" stroke="#d2d2d2" stroke-width="1.1"/><path d="M33.35 32.95L32.15 31.75" stroke="#d2d2d2" stroke-width="1.1"/><path d="M35.90 31.90L35.90 30.20" stroke="#d2d2d2" stroke-width="1.1"/><path d="M38.45 32.95L39.65 31.75" stroke="#d2d2d2" stroke-width="1.1"/><path d="M45.5 38.8V36l1-1l1 1l1-3l1 2l1-3.5l1 2.5l1-1.5l1 2l1-2.5l1 2.5l1 1V38.8Z" fill="#d2d2d2"/><g transform="translate(61.3,31.0)"><rect x="0.5" y="0.5" width="10.2" height="7.800000000000001" fill="#7a7a7a" stroke="#d2d2d2" stroke-width="1"/><path d="M1 7.8C5 7.6 6 1.4 10.2 1" stroke="#f0f0f0" stroke-width="1" fill="none"/><path d="M4 1V8M7.4 1V8M1 3.6H10M1 6H10" stroke="#c0c0c0" stroke-width="0.4"/></g><g transform="translate(76.7,31.0)"><rect x="0.5" y="0.5" width="9.8" height="7.800000000000001" fill="#7a7a7a" stroke="#d2d2d2" stroke-width="1"/><path d="M1 7.8L9.8 1V7.8Z" fill="#d8d8d8"/><path d="M2 3H4.4M3.2 1.8V4.2" stroke="#f0f0f0" stroke-width="0.8"/><path d="M6.5 6.4H8.8" stroke="#444" stroke-width="0.8"/></g><path d="M92.20000000000005 31H102.50000000000004L97.35000000000005 39.8Z" fill="#7a7a7a" stroke="#d2d2d2" stroke-width="1"/><path d="M94.80000000000004 32.8H99.90000000000005L97.35000000000005 37.2Z" fill="#b9b9b9"/><g transform="translate(23.3,48.2)"><rect x="0.5" y="0.5" width="9.5" height="8" fill="#7a7a7a" stroke="#d2d2d2" stroke-width="1"/><rect x="1" y="1" width="8.5" height="3" fill="#d8d8d8"/><path d="M3.8 1V4M6.6 1V4" stroke="#666" stroke-width="0.6"/><rect x="1" y="4.6" width="8.5" height="3.4" fill="#aaa"/></g><g transform="translate(37.8,48.2)" stroke="#d2d2d2" fill="none" stroke-width="1"><path d="M5.7 0.6V8.5M3.5 8.6H8M1.8 2.2H9.6"/><path d="M0.4 6.2L1.9 2.4L3.4 6.2ZM8 6.2L9.5 2.4L11 6.2Z" fill="#d2d2d2" stroke-width="0.6"/></g><g transform="translate(53.3,48.2)"><rect x="0.5" y="0.5" width="9.9" height="8" fill="#7a7a7a" stroke="#d2d2d2" stroke-width="1"/><rect x="1" y="1" width="4.4" height="7" fill="#4e4e4e"/><rect x="5.4" y="1" width="4.5" height="7" fill="#d8d8d8"/></g><g transform="translate(68.3,48.2)"><path d="M0.5 1.6H2.5L3.2 0.5H6L6.7 1.6H8.6V6.6H0.5Z" fill="#d2d2d2"/><circle cx="4.6" cy="4" r="1.6" fill="#666"/><circle cx="8.4" cy="6.2" r="2.8" fill="#8a8a8a" stroke="#d2d2d2" stroke-width="0.9"/></g><g transform="translate(84.2,48.2)" fill="#d2d2d2"><circle cx="5.2" cy="2.9" r="2.7"/><circle cx="3" cy="6.2" r="2.7"/><circle cx="7.4" cy="6.2" r="2.7"/><circle cx="5.2" cy="5.2" r="1" fill="#555"/></g><g transform="translate(99.2,48.2)"><rect x="0.5" y="0.5" width="10.1" height="8" fill="#7a7a7a" stroke="#d2d2d2" stroke-width="1"/><rect x="1" y="1" width="9.1" height="7" fill="#d8d8d8"/><path d="M4 1V8M7 1V8M1 3.3H10M1 5.7H10" stroke="#5a5a5a" stroke-width="0.6"/></g><g transform="translate(30.5,65.3)"><rect x="0.5" y="0.5" width="9.8" height="7.800000000000001" fill="#7a7a7a" stroke="#d2d2d2" stroke-width="1"/><rect x="1" y="1" width="8.8" height="6.8" fill="#999"/><ellipse cx="5.4" cy="4.4" rx="3" ry="1.8" transform="rotate(-35 5.4 4.4)" fill="#444"/><path d="M1 7.8L9.8 1" stroke="#e8e8e8" stroke-width="0.8"/></g><g transform="translate(46.2,65.3)"><rect x="0.5" y="0.5" width="10" height="7.800000000000001" fill="#7a7a7a" stroke="#d2d2d2" stroke-width="1"/><path d="M1 7.8V5L6 1H10V3.5L4.5 7.8Z" fill="#d0d0d0"/><path d="M1 7.8L10 1" stroke="#555" stroke-width="1.2"/></g><g transform="translate(61.3,65.3)"><rect x="0.5" y="0.5" width="10.2" height="7.800000000000001" fill="#7a7a7a" stroke="#d2d2d2" stroke-width="1"/><path d="M1 7.8V4.5L3.5 4L5 2.5L7 3L10.2 1V7.8Z" fill="#4a4a4a"/><path d="M1 4.5L3.5 4L5 2.5L7 3L10.2 1V1H1Z" fill="#e0e0e0"/></g><g transform="translate(76.7,65.3)"><rect x="0.5" y="0.5" width="9.8" height="7.800000000000001" fill="#7a7a7a" stroke="#d2d2d2" stroke-width="1"/><path d="M1 1L5.4 4.4L9.8 1ZM1 7.8L5.4 4.4L9.8 7.8Z" fill="#d0d0d0"/><path d="M1 1L5.4 4.4L1 7.8ZM9.8 1L5.4 4.4L9.8 7.8Z" fill="#666"/></g><defs><linearGradient id="gm"><stop offset="0" stop-color="#222"/><stop offset="1" stop-color="#d8d8d8"/></linearGradient></defs><g transform="translate(92.2,65.3)"><rect x="0.5" y="0.5" width="9.6" height="7.800000000000001" fill="#7a7a7a" stroke="#d2d2d2" stroke-width="1"/><rect x="1" y="1" width="8.6" height="6.8" fill="url(#gm)"/></g></svg>
</div>

<!-- LAYERS PANEL -->
<div class="a pn" style="left:437.5px;top:134px;width:158.5px;height:278.5px">
  <div class="a tb" style="left:0;top:0;width:158.5px;height:10.5px"></div>
  <div class="a tab on" style="left:0;width:23px">图层</div>
  <div class="a tab" style="left:23.5px;width:23px">通道</div>
  <div class="a tab" style="left:47px;width:25px">路径</div>
  <div class="a pm" style="left:148px;top:3.5px"></div>
</div>
<!--LAYERS-->
<div class="a" id="layers">
  <div class="a" style="left:440.8px;top:148.2px;width:43.6px;height:11.4px;background:linear-gradient(#666,#555);border:1px solid #2e2e2e;border-radius:2px"></div>
  <svg class="a" style="left:444px;top:150.5px" width="7" height="7" viewBox="0 0 7 7"><circle cx="4" cy="2.8" r="2" fill="none" stroke="#e6e6e6" stroke-width="0.9"/><path d="M2.6 4.3L0.6 6.5" stroke="#e6e6e6" stroke-width="1"/></svg>
  <div class="t" style="left:454px;top:149px;font-size:7.6px;color:#f2f2f2;font-weight:400">类型</div>
  <div class="a ud" style="left:477.5px;top:150.7px"></div>
  <svg class="a" style="left:498.5px;top:150px" width="72" height="8" viewBox="0 0 72 8">
    <rect x="0.5" y="0.8" width="8" height="6.2" fill="none" stroke="#c9c9c9" stroke-width="0.9"/><path d="M1.5 6L3.5 3.6L5 5L6 4.2L7.6 6Z" fill="#c9c9c9"/><circle cx="6.3" cy="2.6" r="0.7" fill="#c9c9c9"/>
    <circle cx="20" cy="4" r="3.4" fill="#c9c9c9"/><path d="M17.7 6.3A3.3 3.3 0 0 0 22.3 1.7Z" fill="#5a5a5a"/>
    <text x="30.6" y="7.4" font-family="Liberation Serif, serif" font-weight="bold" font-size="9" fill="#c9c9c9">T</text>
    <rect x="46.5" y="1.5" width="6" height="5" fill="none" stroke="#c9c9c9" stroke-width="0.9"/><rect x="45.2" y="0.3" width="2" height="2" fill="#c9c9c9"/><rect x="51.6" y="0.3" width="2" height="2" fill="#c9c9c9"/><rect x="45.2" y="5.7" width="2" height="2" fill="#c9c9c9"/><rect x="51.6" y="5.7" width="2" height="2" fill="#c9c9c9"/>
    <path d="M62 0.8H66L68.6 3V7.5H62Z" fill="#c9c9c9"/><rect x="65" y="4" width="4.5" height="4" fill="#535353"/><rect x="65.8" y="4.8" width="3.5" height="3" fill="#c9c9c9"/>
  </svg>
  <div class="a" style="left:582.4px;top:149px;width:4px;height:10px;background:#2e2e2e;border-radius:1px"></div><div class="a" style="left:582.9px;top:149.5px;width:3px;height:4.5px;background:#b9b9b9;border-radius:1px"></div>
  <div class="a" style="left:441.3px;top:164.7px;width:69.4px;height:12.7px;background:linear-gradient(#686868,#565656);border:1px solid #2e2e2e;border-radius:2px"></div>
  <div class="t" style="left:444.7px;top:166.2px;font-size:7.6px;color:#f2f2f2;font-weight:400">柔光</div>
  <div class="a ud" style="left:503.5px;top:167.8px"></div>
  <div class="a" style="left:438.5px;top:161.8px;width:76px;height:18.4px;border:2.2px solid #ea1a14;border-radius:2.5px"></div>
  <div class="t" style="left:516.4px;top:166.2px;font-size:7.4px;color:#f2f2f2;font-weight:400">不透明度:</div>
  <div class="a fld" style="left:552.4px;top:166px"></div><div class="t" style="left:554.6px;top:166.7px;font-size:7.8px;color:#f8f8f8">100%</div>
  <div class="a btn" style="left:576.5px;top:166px"></div>
  <div class="t" style="left:441.9px;top:184.8px;font-size:7.6px;color:#f2f2f2;font-weight:400">锁定:</div>
  <svg class="a" style="left:465px;top:185.5px" width="52" height="10" viewBox="0 0 52 10">
    <rect x="0.5" y="1.2" width="7" height="7" fill="#d8d8d8"/><path d="M0.5 1.2h2.33v2.33h-2.33zM5.17 1.2h2.33v2.33h-2.33zM2.83 3.53h2.33v2.33h-2.33zM0.5 5.87h2.33v2.33h-2.33zM5.17 5.87h2.33v2.33h-2.33z" fill="#5a5a5a"/>
    <path d="M22.5 0.8L16.5 6.2" stroke="#d8d8d8" stroke-width="1.2"/><path d="M13 9C14.5 8.6 16.8 8.3 17.3 6.6L16 5.5C14.2 5.8 14.4 7.8 13 9Z" fill="#d8d8d8"/>
    <path d="M32 0.8V9.2M27.8 5H36.2M30.6 2.3L32 0.8L33.4 2.3M30.6 7.7L32 9.2L33.4 7.7M29.3 3.6L27.8 5L29.3 6.4M34.7 3.6L36.2 5L34.7 6.4" stroke="#d8d8d8" stroke-width="0.9" fill="none"/>
    <rect x="43.3" y="4.6" width="6" height="4.6" fill="#d8d8d8"/><path d="M44.6 4.6V3A1.7 1.7 0 0 1 48 3V4.6" fill="none" stroke="#d8d8d8" stroke-width="1"/>
  </svg>
  <div class="t" style="left:531.4px;top:184.8px;font-size:7.6px;color:#f2f2f2;font-weight:400">填充:</div>
  <div class="a fld" style="left:552.4px;top:184.5px"></div><div class="t" style="left:554.6px;top:185.2px;font-size:7.8px;color:#f8f8f8">100%</div>
  <div class="a btn" style="left:576.5px;top:184.5px"></div>
  <div class="a" style="left:437.5px;top:199.5px;width:149px;height:110.3px;background:#535353"></div>
  <div class="a" style="left:456.5px;top:236.4px;width:130px;height:18.4px;background:#596678"></div>
  <div class="a" style="left:437.5px;top:199.5px;width:149px;height:1px;background:#3b3b3b"></div>
  <div class="a" style="left:437.5px;top:217.7px;width:149px;height:1px;background:#3b3b3b"></div>
  <div class="a" style="left:437.5px;top:235.9px;width:149px;height:1px;background:#3b3b3b"></div>
  <div class="a" style="left:437.5px;top:254.3px;width:149px;height:1px;background:#3b3b3b"></div>
  <div class="a" style="left:437.5px;top:272.8px;width:149px;height:1px;background:#3b3b3b"></div>
  <div class="a" style="left:437.5px;top:291.0px;width:149px;height:1px;background:#3b3b3b"></div>
  <div class="a" style="left:437.5px;top:309.3px;width:149px;height:1px;background:#3b3b3b"></div>
  <div class="a" style="left:456px;top:199.5px;width:1px;height:110.3px;background:#3b3b3b"></div>
  <div class="a" style="left:586.3px;top:199.5px;width:9.7px;height:200px;background:#3e3e3e"></div>
  <svg class="a" style="left:442.5px;top:205.7px" width="9" height="7" viewBox="0 0 9 7"><path d="M0.3 3.5Q4.5 -1.2 8.7 3.5Q4.5 8.2 0.3 3.5Z" fill="#c2c2c2"/><circle cx="4.5" cy="3.4" r="1.7" fill="#474747"/><circle cx="4.5" cy="3.4" r="0.7" fill="#b0b0b0"/></svg>
  <svg class="a" style="left:442.5px;top:223.9px" width="9" height="7" viewBox="0 0 9 7"><path d="M0.3 3.5Q4.5 -1.2 8.7 3.5Q4.5 8.2 0.3 3.5Z" fill="#c2c2c2"/><circle cx="4.5" cy="3.4" r="1.7" fill="#474747"/><circle cx="4.5" cy="3.4" r="0.7" fill="#b0b0b0"/></svg>
  <svg class="a" style="left:442.5px;top:242.2px" width="9" height="7" viewBox="0 0 9 7"><path d="M0.3 3.5Q4.5 -1.2 8.7 3.5Q4.5 8.2 0.3 3.5Z" fill="#c2c2c2"/><circle cx="4.5" cy="3.4" r="1.7" fill="#474747"/><circle cx="4.5" cy="3.4" r="0.7" fill="#b0b0b0"/></svg>
  <svg class="a" style="left:442.5px;top:260.6px" width="9" height="7" viewBox="0 0 9 7"><path d="M0.3 3.5Q4.5 -1.2 8.7 3.5Q4.5 8.2 0.3 3.5Z" fill="#c2c2c2"/><circle cx="4.5" cy="3.4" r="1.7" fill="#474747"/><circle cx="4.5" cy="3.4" r="0.7" fill="#b0b0b0"/></svg>
  <svg class="a" style="left:442.5px;top:279.0px" width="9" height="7" viewBox="0 0 9 7"><path d="M0.3 3.5Q4.5 -1.2 8.7 3.5Q4.5 8.2 0.3 3.5Z" fill="#c2c2c2"/><circle cx="4.5" cy="3.4" r="1.7" fill="#474747"/><circle cx="4.5" cy="3.4" r="0.7" fill="#b0b0b0"/></svg>
  <svg class="a" style="left:442.5px;top:297.25px" width="9" height="7" viewBox="0 0 9 7"><path d="M0.3 3.5Q4.5 -1.2 8.7 3.5Q4.5 8.2 0.3 3.5Z" fill="#c2c2c2"/><circle cx="4.5" cy="3.4" r="1.7" fill="#474747"/><circle cx="4.5" cy="3.4" r="0.7" fill="#b0b0b0"/></svg>
  <svg class="a" style="left:462.5px;top:206.4px" width="5" height="6" viewBox="0 0 5 6"><path d="M4.5 0.5H2.3V4.5M0.6 3L2.3 5L4 3" stroke="#e0e0e0" stroke-width="0.9" fill="none"/></svg><svg class="a" style="left:475px;top:204.7px" width="8" height="8" viewBox="0 0 8 8"><circle cx="4" cy="4" r="3.5" fill="#d8d8d8"/><path d="M1.6 6.4A3.4 3.4 0 0 0 6.4 1.6Z" fill="#6a6a6a"/></svg><svg class="a" style="left:491.2px;top:204.2px" width="6" height="10" viewBox="0 0 6 10"><rect x="1.2" y="0.6" width="3.6" height="4" rx="1.6" fill="none" stroke="#d6d6d6" stroke-width="1"/><rect x="1.2" y="5.4" width="3.6" height="4" rx="1.6" fill="none" stroke="#d6d6d6" stroke-width="1"/><path d="M3 3.4V6.6" stroke="#d6d6d6" stroke-width="1"/></svg>
  <div class="a" style="left:499.7px;top:202.1px;width:19.6px;height:14px;background:#fff;border:1px solid #2a2a2a"></div>
  <svg class="a" style="left:462.5px;top:224.6px" width="5" height="6" viewBox="0 0 5 6"><path d="M4.5 0.5H2.3V4.5M0.6 3L2.3 5L4 3" stroke="#e0e0e0" stroke-width="0.9" fill="none"/></svg><svg class="a" style="left:475px;top:223.0px" width="8" height="8" viewBox="0 0 8 8"><circle cx="4" cy="4" r="3.5" fill="#d8d8d8"/><path d="M1.6 6.4A3.4 3.4 0 0 0 6.4 1.6Z" fill="#6a6a6a"/></svg><svg class="a" style="left:491.2px;top:222.5px" width="6" height="10" viewBox="0 0 6 10"><rect x="1.2" y="0.6" width="3.6" height="4" rx="1.6" fill="none" stroke="#d6d6d6" stroke-width="1"/><rect x="1.2" y="5.4" width="3.6" height="4" rx="1.6" fill="none" stroke="#d6d6d6" stroke-width="1"/><path d="M3 3.4V6.6" stroke="#d6d6d6" stroke-width="1"/></svg>
  <div class="a" style="left:499.7px;top:220.3px;width:19.6px;height:14px;background:#fff;border:1px solid #2a2a2a"></div>
  <div class="t" style="left:525.5px;top:205.5px;font-size:7.6px;color:#f2f2f2;font-weight:400">照片滤镜 1</div>
  <div class="t" style="left:525.5px;top:223.8px;font-size:7.6px;color:#f2f2f2;font-weight:400">曲线 1</div>
  <svg class="a" style="left:462.5px;top:242.4px" width="5" height="6" viewBox="0 0 5 6"><path d="M4.5 0.5H2.3V4.5M0.6 3L2.3 5L4 3" stroke="#e0e0e0" stroke-width="0.9" fill="none"/></svg>
  <svg class="a" style="left:468px;top:237px" width="23" height="17" viewBox="0 0 23 17"><defs><filter id="cl" x="0" y="0" width="100%" height="100%"><feTurbulence type="fractalNoise" baseFrequency="0.13" numOctaves="2" seed="4"/><feColorMatrix type="matrix" values="1.6 0 0 0 -0.42  1.6 0 0 0 -0.42  1.6 0 0 0 -0.42  0 0 0 0 1"/></filter></defs><rect x="0.5" y="0.5" width="22" height="16" fill="#262626"/><rect x="1.5" y="1.5" width="20" height="14" fill="#9a9a9a"/><rect x="1.5" y="1.5" width="20" height="14" filter="url(#cl)"/><path d="M0.5 4V0.5H5M18 0.5H22.5V4M22.5 13V16.5H18M5 16.5H0.5V13" stroke="#fff" stroke-width="1" fill="none"/></svg>
  <div class="t" style="left:496px;top:241.6px;font-size:7.6px;color:#f6f6f6;font-weight:400">图层 3</div>
  <svg class="a" style="left:459px;top:257px" width="21" height="15" viewBox="0 0 21 15"><defs><pattern id="ck" width="2.4" height="2.4" patternUnits="userSpaceOnUse"><rect width="2.4" height="2.4" fill="#fff"/><rect width="1.2" height="1.2" fill="#d0d0d0"/><rect x="1.2" y="1.2" width="1.2" height="1.2" fill="#d0d0d0"/></pattern></defs><rect x="0.5" y="0.5" width="20" height="14" fill="url(#ck)" stroke="#262626"/><rect x="4.7" y="3.3" width="10.6" height="7.6" fill="#9c9c9c"/><path d="M6 9Q8 5 9.5 8Q11 4.5 12.5 8Q13.5 6.5 14.5 9Z" fill="#5e5e5e"/></svg>
  <div class="t" style="left:485.5px;top:259.3px;font-size:7.6px;color:#f2f2f2;font-weight:400;text-decoration:underline">图层 2</div>
  <svg class="a" style="left:459px;top:275px" width="21" height="15" viewBox="0 0 21 15"><rect x="0.5" y="0.5" width="20" height="14" fill="#2e9cec" stroke="#262626"/><rect x="1" y="8.6" width="19" height="5.4" fill="#2f8db4"/><rect x="1" y="7.6" width="6" height="1.2" fill="#5a8a3a"/><rect x="4.7" y="3.8" width="10.6" height="6.4" fill="#8f8b85"/><path d="M6.5 8Q8 5 9.5 7.5Q11 4.5 12.5 7.5Q13.5 6 14.5 8Z" fill="#d8d4cc"/></svg>
  <div class="t" style="left:485.5px;top:278.3px;font-size:7.6px;color:#f2f2f2;font-weight:400">图层 1</div>
  <svg class="a" style="left:459px;top:293.6px" width="21" height="15" viewBox="0 0 21 15"><rect x="0.5" y="0.5" width="20" height="14" fill="#2e9cec" stroke="#262626"/><rect x="1" y="8.6" width="19" height="5.4" fill="#2f8db4"/><rect x="1" y="7.6" width="6" height="1.2" fill="#5a8a3a"/><path d="M5 8.8L6 6L7 8L8 5.5L9 8L11 6Q12.5 4.5 13 7.5Q14.5 5.5 15.5 8.8Z" fill="#c9b59a"/></svg>
  <div class="t" style="left:487px;top:296.8px;font-size:7.6px;color:#f2f2f2;font-weight:400;font-style:italic;transform:skewX(-12deg)">背景</div>
  <svg class="a" style="left:570px;top:296.8px" width="7" height="9" viewBox="0 0 7 9"><rect x="0.5" y="3.8" width="6" height="4.6" fill="none" stroke="#d0d0d0" stroke-width="1"/><path d="M1.9 3.8V2.6A1.6 1.6 0 0 1 5.1 2.6V3.8" fill="none" stroke="#d0d0d0" stroke-width="1"/><rect x="2.8" y="5.3" width="1.4" height="1.6" fill="#d0d0d0"/></svg>
  <div class="a" style="left:437.5px;top:310.3px;width:149px;height:89px;background:#464646"></div>
  <div class="a" style="left:437.5px;top:399.3px;width:158.5px;height:12.7px;background:#535353;border-top:1px solid #3a3a3a"></div>
  <svg class="a" style="left:467px;top:401px" width="114" height="11" viewBox="0 0 114 11">
    <g fill="none" stroke="#8a8a8a" stroke-width="1"><rect x="1.5" y="3.6" width="4.6" height="3.6" rx="1.8"/><rect x="4.6" y="3.6" width="4.6" height="3.6" rx="1.8"/></g>
    <text x="19" y="8.6" font-family="Liberation Serif, serif" font-style="italic" font-size="9" fill="#d4d4d4">fx</text><path d="M28 8.5h2.4l-1.2 1.4z" fill="#d4d4d4"/>
    <rect x="35.5" y="2" width="8.4" height="6.8" fill="#d4d4d4"/><circle cx="39.7" cy="5.4" r="2" fill="#4a4a4a"/>
    <circle cx="57" cy="5.4" r="3.6" fill="#d4d4d4"/><path d="M54.5 7.9A3.5 3.5 0 0 0 59.5 2.9Z" fill="#4a4a4a"/><path d="M61.5 8.5h2.4l-1.2 1.4z" fill="#d4d4d4"/>
    <path d="M70 2.2H73L74 3.2H78.3V8.8H70Z" fill="#d4d4d4"/>
    <path d="M87.3 2H94.7V8.8H90.3L87.3 6Z" fill="#d4d4d4"/><path d="M87.3 6H90.3V8.8" fill="#535353" stroke="#d4d4d4" stroke-width="0.7"/>
    <g fill="#c4c4c4"><rect x="104" y="3.6" width="7" height="0.9"/><rect x="106.3" y="2.4" width="2.4" height="1.2"/><path d="M104.8 5.2H110.2L109.7 9.6H105.3Z"/></g>
  </svg>
</div>

<div class="a" style="left:399.6px;top:401.3px;width:10.4px;height:10px;background:#535353"></div>
<div class="a" style="left:1px;top:411.2px;width:598px;height:1.5px;background:#2b2b2b"></div>
<div class="a" style="left:1px;top:412.7px;width:598px;height:2.3px;background:#4a4a4a"></div>
<div class="a" style="left:598px;top:1px;width:2px;height:414px;background:#4a4a4a"></div>
<div class="a" style="left:596.5px;top:14px;width:1.5px;height:401px;background:#2a2a2a"></div>
<div class="a" style="left:1.2px;top:1px;width:1.3px;height:414px;background:#515151"></div>
<div class="a" style="left:2.5px;top:42px;width:0.7px;height:373px;background:#3a3a3a"></div>
<div class="a" style="left:1.2px;top:1px;width:597px;height:0.9px;background:#676767"></div>
<!-- DROPDOWN -->
<div class="a" id="menu">
  <div class="t" style="left:14.0px;top:1.5px">云彩</div>
  <div class="t sc" style="right:11.7px;top:1.5px">Ctrl+F</div>
  <div class="t" style="left:14.0px;top:20.2px">转换为智能滤镜</div>
  <div class="t" style="left:14.0px;top:39.3px">抽出<span class="m">(X)...</span></div>
  <div class="t" style="left:14.0px;top:52.7px">滤镜库<span class="m">(G)...</span></div>
  <div class="t" style="left:14.0px;top:66.3px">自适应广角<span class="m">(A)...</span></div>
  <div class="t sc" style="right:11.7px;top:66.3px">Shift+Ctrl+A</div>
  <div class="t" style="left:14.0px;top:79.3px">镜头校正<span class="m">(R)...</span></div>
  <div class="t sc" style="right:11.7px;top:79.3px">Shift+Ctrl+R</div>
  <div class="t" style="left:14.0px;top:93.0px">液化<span class="m">(L)...</span></div>
  <div class="t sc" style="right:11.7px;top:93.0px">Shift+Ctrl+X</div>
  <div class="t" style="left:14.0px;top:106.0px">油画<span class="m">(O)...</span></div>
  <div class="t" style="left:14.0px;top:119.8px">消失点<span class="m">(V)...</span></div>
  <div class="t sc" style="right:11.7px;top:119.8px">Alt+Ctrl+V</div>
  <div class="t" style="left:14.0px;top:139.0px">风格化</div>
  <div class="arr" style="top:141.0px;border-left-color:#1a1a1a"></div>
  <div class="t" style="left:14.0px;top:152.7px">模糊</div>
  <div class="arr" style="top:154.7px;border-left-color:#1a1a1a"></div>
  <div class="t" style="left:14.0px;top:166.2px">扭曲</div>
  <div class="arr" style="top:168.2px;border-left-color:#1a1a1a"></div>
  <div class="t" style="left:14.0px;top:179.0px">锐化</div>
  <div class="arr" style="top:181.0px;border-left-color:#1a1a1a"></div>
  <div class="t" style="left:14.0px;top:192.6px">视频</div>
  <div class="arr" style="top:194.6px;border-left-color:#1a1a1a"></div>
  <div class="t" style="left:14.0px;top:205.8px">像素化</div>
  <div class="arr" style="top:207.8px;border-left-color:#1a1a1a"></div>
  <div class="a" style="left:1.5px;top:217.0px;width:145px;height:13.5px;background:#3399ff"></div>
  <div class="t" style="left:14.0px;top:219.0px;color:#fff">渲染</div>
  <div class="arr" style="top:221.0px;border-left-color:#fff"></div>
  <div class="t" style="left:14.0px;top:232.8px">杂色</div>
  <div class="arr" style="top:234.8px;border-left-color:#1a1a1a"></div>
  <div class="t" style="left:14.0px;top:245.7px">其它</div>
  <div class="arr" style="top:247.7px;border-left-color:#1a1a1a"></div>
  <div class="t" style="left:14.0px;top:264.5px;font-size:8.3px;font-weight:400;color:#2e2e2e">Digimarc</div>
  <div class="arr" style="top:266.5px;border-left-color:#1a1a1a"></div>
  <div class="t" style="left:14.0px;top:278.5px;font-size:8.3px;font-weight:400;color:#2e2e2e">Flaming Pear</div>
  <div class="arr" style="top:280.5px;border-left-color:#1a1a1a"></div>
  <div class="t" style="left:14.0px;top:292.3px;font-size:8.3px;font-weight:400;color:#2e2e2e">Imagenomic</div>
  <div class="arr" style="top:294.3px;border-left-color:#1a1a1a"></div>
  <div class="t" style="left:14.0px;top:311.0px">浏览联机滤镜<span class="m">...</span></div>
  <div class="sep" style="top:15.7px"></div>
  <div class="sep" style="top:33.8px"></div>
  <div class="sep" style="top:133.6px"></div>
  <div class="sep" style="top:259.0px"></div>
  <div class="sep" style="top:305.7px"></div>
</div>
<div class="a" id="sub">
  <div class="a" style="left:1.2px;top:55.6px;width:57.3px;height:12.3px;background:#3399ff"></div>
  <div class="t" style="left:13.2px;top:3.8px">分层云彩</div>
  <div class="t" style="left:13.2px;top:16.4px">光照效果<span class="m">...</span></div>
  <div class="t" style="left:13.2px;top:29.6px">镜头光晕<span class="m">...</span></div>
  <div class="t" style="left:13.2px;top:42.8px">纤维<span class="m">...</span></div>
  <div class="t" style="left:13.2px;top:56.2px;color:#fff">云彩</div>
</div>
</body>
</html>
